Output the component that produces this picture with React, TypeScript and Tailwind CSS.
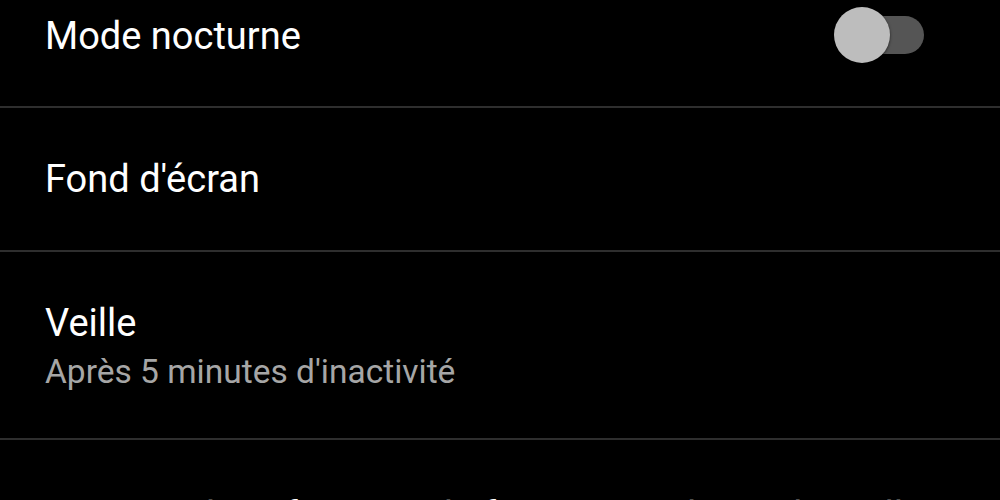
export default function App() {
  const font = { fontFamily: "Roboto, 'Noto Sans', sans-serif" };
  return (
    <div className="h-[500px] w-[1000px] overflow-hidden bg-black" style={font}>
      <div className="-mt-[35px] flex flex-col">
        <div className="flex h-[141px] items-center justify-between pl-[45px] pr-[76px]">
          <span className="text-[38px] leading-none text-white">Mode nocturne</span>
          <div className="relative -mt-[2px] h-[56px] w-[90px]">
            <div className="absolute left-[4px] right-0 top-[9px] h-[38px] rounded-full bg-[#555555]" />
            <div className="absolute left-0 top-0 h-[56px] w-[56px] rounded-full bg-[#bdbdbd] shadow-[0_1px_3px_rgba(0,0,0,0.6)]" />
          </div>
        </div>
        <div className="h-[2px] bg-[#2e2e2e]" />
        <div className="flex h-[142px] items-center pl-[45px]">
          <span className="text-[38px] leading-none text-white">Fond d'écran</span>
        </div>
        <div className="h-[2px] bg-[#2e2e2e]" />
        <div className="flex h-[186px] flex-col justify-center gap-[13px] pl-[45px] pt-[2px]">
          <span className="text-[38px] leading-none text-white">Veille</span>
          <span className="text-[33.5px] leading-none text-[#a6a6a6]">Après 5 minutes d'inactivité</span>
        </div>
        <div className="h-[2px] bg-[#2e2e2e]" />
        <div className="flex h-[142px] items-center pl-[45px] pt-[10px]">
          <span className="text-[38px] leading-none text-white">Appuyer deux fois pour le faire quitter le Mode Veille</span>
        </div>
      </div>
    </div>
  );
}
